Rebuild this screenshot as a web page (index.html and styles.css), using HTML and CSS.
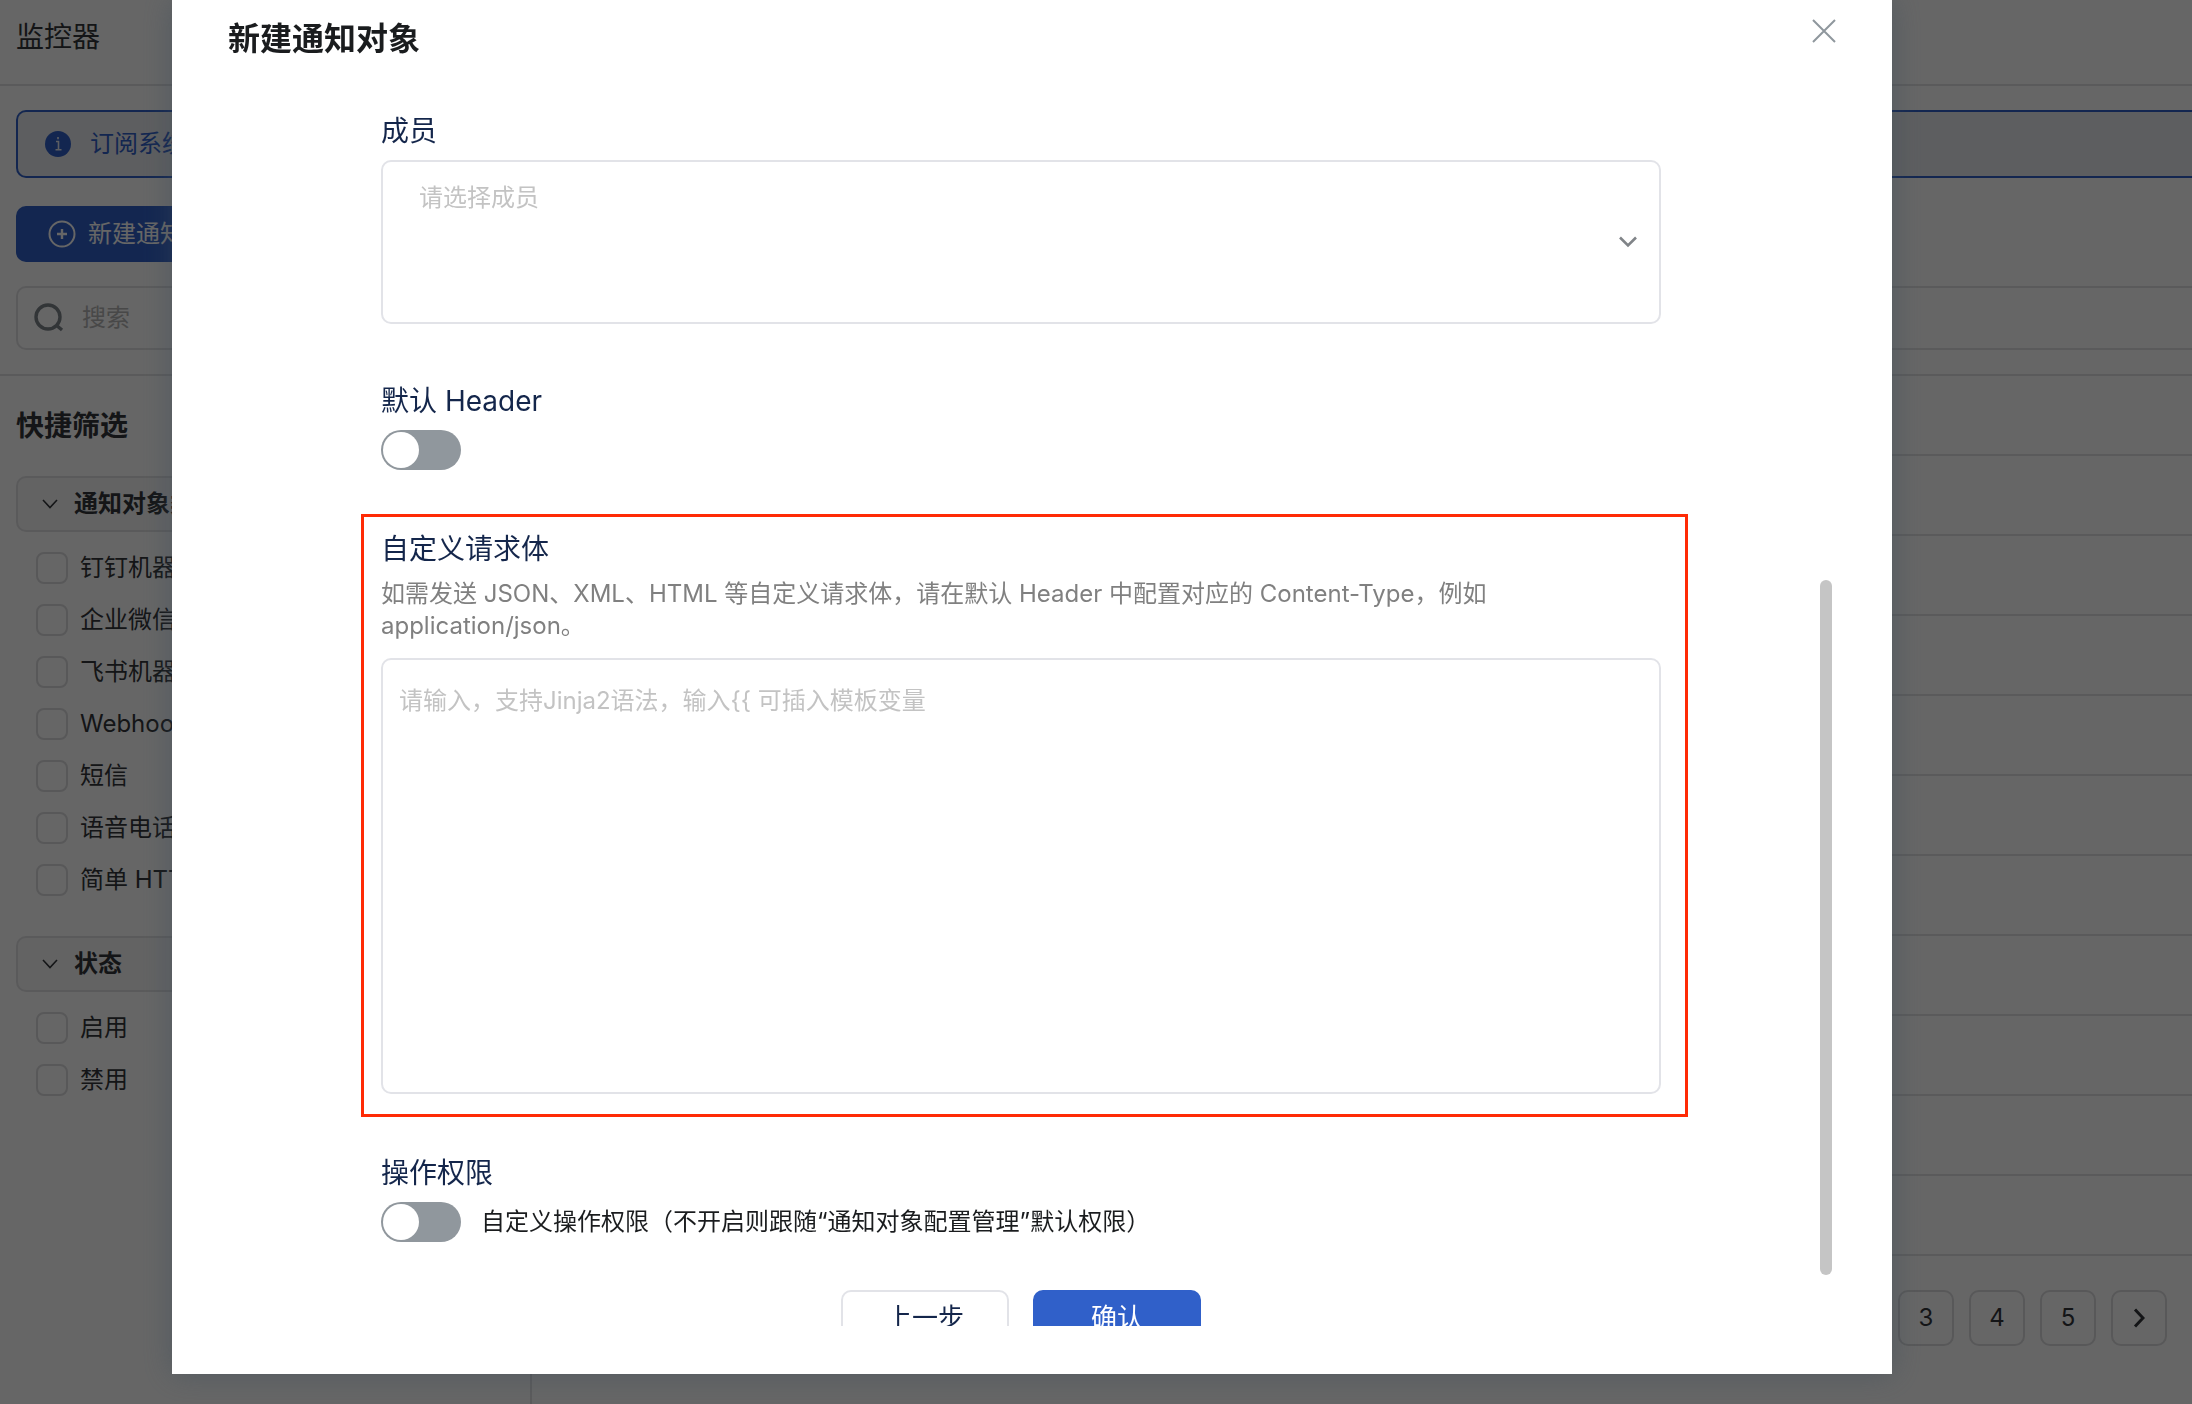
FILE: index.html
```html
<!DOCTYPE html>
<html lang="zh-CN">
<head>
    <meta charset="UTF-8">
    <meta name="viewport" content="width=device-width, initial-scale=1.0">
    <title>监控器 - 新建通知对象</title>
    <link rel="stylesheet" href="styles.css">
</head>
<body>
    <!-- Page behind the dialog -->
    <div class="page">
        <header class="page-header">监控器</header>

        <div class="toolbar">
            <div class="notice">
                <svg width="28" height="28" viewBox="0 0 28 28"><circle cx="14" cy="14" r="13" fill="#3060c9"/><path d="M12 11.5H14.5V19.5M11.5 19.8H17.5M14 7V9.2" stroke="#e8ecf4" stroke-width="1.6" fill="none"/></svg>
                <span>订阅系统通知</span>
            </div>
            <button class="btn-create">
                <svg width="28" height="28" viewBox="0 0 28 28" fill="none" stroke="#fff" stroke-width="2"><circle cx="14" cy="14" r="12.5"/><path d="M14 9V19M9 14H19" stroke-width="2.4"/></svg>
                新建通知对象
            </button>
            <div class="search">
                <svg width="32" height="32" viewBox="0 0 32 32" fill="none" stroke="#7d848b" stroke-width="3.4"><circle cx="16" cy="15" r="12"/><path d="M24 23L30 28"/></svg>
                <input type="text" placeholder="搜索" aria-label="搜索">
            </div>
        </div>

        <div class="content">
            <aside class="sidebar">
                <h2>快捷筛选</h2>
                <section>
                    <button class="group-title">
                        <svg width="16" height="10" viewBox="0 0 16 10" fill="none" stroke="#33363a" stroke-width="1.6"><path d="M1 1L8 8.5L15 1"/></svg>
                        通知对象类型
                    </button>
                    <label><input type="checkbox">钉钉机器人</label>
                    <label><input type="checkbox">企业微信机器人</label>
                    <label><input type="checkbox">飞书机器人</label>
                    <label><input type="checkbox">Webhook</label>
                    <label><input type="checkbox">短信</label>
                    <label><input type="checkbox">语音电话</label>
                    <label><input type="checkbox">简单 HTTP</label>
                </section>
                <section>
                    <button class="group-title">
                        <svg width="16" height="10" viewBox="0 0 16 10" fill="none" stroke="#33363a" stroke-width="1.6"><path d="M1 1L8 8.5L15 1"/></svg>
                        状态
                    </button>
                    <label><input type="checkbox">启用</label>
                    <label><input type="checkbox">禁用</label>
                </section>
            </aside>

            <main class="list">
                <div class="row"></div>
                <div class="row"></div>
                <div class="row"></div>
                <div class="row"></div>
                <div class="row"></div>
                <div class="row"></div>
                <div class="row"></div>
                <div class="row"></div>
                <div class="row"></div>
                <div class="row"></div>
                <div class="row"></div>
                <nav class="pagination">
                    <button>3</button>
                    <button>4</button>
                    <button>5</button>
                    <button aria-label="下一页">
                        <svg width="12" height="20" viewBox="0 0 12 20" fill="none" stroke="#33363a" stroke-width="3"><path d="M2 1.5L10 10L2 18.5"/></svg>
                    </button>
                </nav>
            </main>
        </div>
    </div>

    <!-- Dialog -->
    <div class="overlay">
        <div class="modal" role="dialog" aria-labelledby="modalTitle">
            <div class="modal-header">
                <h1 id="modalTitle">新建通知对象</h1>
                <button class="close" aria-label="关闭">
                    <svg width="24" height="24" viewBox="0 0 24 24" fill="none" stroke="#8f979d" stroke-width="2"><path d="M1 1L23 23M23 1L1 23"/></svg>
                </button>
            </div>

            <div class="modal-body">
                <form>
                    <div class="field">
                        <label for="members">成员</label>
                        <button type="button" class="select" id="members">
                            <span>请选择成员</span>
                            <svg width="18" height="12" viewBox="0 0 18 12" fill="none" stroke="#808488" stroke-width="2.6"><path d="M1 1.5L9 9.5L17 1.5"/></svg>
                        </button>
                    </div>

                    <div class="field">
                        <label for="defaultHeader">默认 Header</label>
                        <input type="checkbox" class="switch" id="defaultHeader">
                    </div>

                    <div class="field marked">
                        <label for="requestBody">自定义请求体</label>
                        <p>如需发送 JSON、XML、HTML 等自定义请求体，请在默认 Header 中配置对应的 Content-Type，例如 application/json。</p>
                        <textarea id="requestBody" placeholder="请输入，支持Jinja2语法，输入{{ 可插入模板变量"></textarea>
                    </div>

                    <div class="field">
                        <label for="permission">操作权限</label>
                        <div class="switch-row">
                            <input type="checkbox" class="switch" id="permission">
                            <span>自定义操作权限（不开启则跟随“通知对象配置管理”默认权限）</span>
                        </div>
                    </div>

                    <div class="actions">
                        <button type="button">上一步</button>
                        <button type="submit" class="primary">确认</button>
                    </div>
                </form>
                <div class="scrollbar"></div>
            </div>
        </div>
    </div>
</body>
</html>
```
FILE: styles.css
```css
/* General Styles */
* {
    margin: 0;
    padding: 0;
    box-sizing: border-box;
    font-family: Inter, "Noto Sans CJK SC", sans-serif;
}

body {
    background-color: #fff;
    color: #33363a;
    font-size: 24px;
    line-height: 32px;
    height: 100vh;
    overflow: hidden;
}

button, input, textarea {
    font-size: 24px;
    line-height: 32px;
    color: inherit;
    background: none;
    border: none;
}

button {
    cursor: pointer;
}

svg {
    flex: none;
    display: block;
}

/* Page behind the dialog */
.page {
    height: 100vh;
    display: flex;
    flex-direction: column;
    white-space: nowrap;
}

.page-header {
    height: 86px;
    padding: 17px 16px;
    font-size: 28px;
    line-height: 40px;
    border-bottom: 2px solid #e2e2e4;
}

.toolbar {
    display: flex;
    flex-direction: column;
    align-items: flex-start;
    padding: 24px 0 24px 16px;
    border-bottom: 2px solid #e2e2e4;
}

.notice {
    width: 100%;
    height: 68px;
    display: flex;
    align-items: center;
    gap: 18px;
    padding-left: 26px;
    border: 2px solid #3060c9;
    border-right: none;
    border-radius: 10px 0 0 10px;
    background-color: #e9ebef;
    color: #3060c9;
}

.btn-create {
    height: 56px;
    display: flex;
    align-items: center;
    gap: 12px;
    margin: 28px 0 24px;
    padding: 0 32px;
    border-radius: 10px;
    background-color: #3060c9;
    color: #fff;
}

.search {
    width: 100%;
    height: 64px;
    display: flex;
    align-items: center;
    gap: 18px;
    padding-left: 14px;
    border: 2px solid #e2e2e4;
    border-right: none;
    border-radius: 10px 0 0 10px;
}

.search input {
    flex: 1;
}

.search input::placeholder {
    color: #b4b4b4;
}

.content {
    flex: 1;
    display: flex;
}

/* Sidebar */
.sidebar {
    width: 532px;
    padding: 30px 16px;
    border-right: 2px solid #e2e2e4;
}

.sidebar h2 {
    font-size: 28px;
    line-height: 40px;
    margin-bottom: 30px;
}

.sidebar section {
    margin-bottom: 30px;
}

.group-title {
    width: 100%;
    height: 56px;
    display: flex;
    align-items: center;
    gap: 16px;
    margin-bottom: 10px;
    padding-left: 24px;
    border: 2px solid #e2e2e4;
    border-radius: 10px;
    background-color: #f7f7f8;
    font-weight: bold;
}

.sidebar label {
    height: 52px;
    display: flex;
    align-items: center;
    gap: 12px;
    padding-left: 20px;
}

.sidebar input {
    appearance: none;
    width: 32px;
    height: 32px;
    border: 2px solid #dcdcde;
    border-radius: 8px;
}

/* List */
.list {
    flex: 1;
}

.row {
    height: 80px;
    border-bottom: 2px solid #e2e2e4;
}

.pagination {
    display: flex;
    justify-content: flex-end;
    gap: 15px;
    padding: 34px 25px;
}

.pagination button {
    width: 56px;
    height: 56px;
    display: flex;
    align-items: center;
    justify-content: center;
    border: 2px solid #dcdcde;
    border-radius: 10px;
}

/* Dialog */
.overlay {
    position: fixed;
    inset: 0;
    display: flex;
    padding: 0 300px 30px 172px;
    background-color: rgba(0, 0, 0, 0.6);
}

.modal {
    flex: 1;
    display: flex;
    flex-direction: column;
    background-color: #fff;
    box-shadow: 0 0 28px rgba(60, 75, 90, 0.5);
}

.modal-header {
    display: flex;
    justify-content: space-between;
    align-items: flex-start;
    padding: 19px 56px 0;
    color: #1a1c1e;
}

.modal-header h1 {
    font-size: 32px;
    line-height: 40px;
}

.modal-body {
    flex: 1;
    min-height: 0;
    position: relative;
    overflow: hidden;
    margin-bottom: 48px;
    padding: 52px 231px 0 209px;
}

.field {
    margin-bottom: 57px;
}

.field label {
    display: block;
    margin-bottom: 9px;
    font-size: 28px;
    line-height: 40px;
    color: #14264b;
}

.select {
    width: 100%;
    height: 164px;
    display: flex;
    justify-content: space-between;
    align-items: center;
    padding: 20px 22px 20px 36px;
    border: 2px solid #e2e3e8;
    border-radius: 10px;
    color: #c3c3c3;
}

.select span {
    align-self: flex-start;
}

.switch {
    appearance: none;
    display: block;
    flex: none;
    width: 80px;
    height: 40px;
    padding: 2px;
    border-radius: 20px;
    background-color: #90979d;
}

.switch::before {
    content: "";
    display: block;
    width: 36px;
    height: 36px;
    border-radius: 50%;
    background-color: #fff;
}

.switch-row {
    display: flex;
    align-items: center;
    gap: 20px;
    color: #1a1c1e;
}

/* Highlighted field */
.marked {
    margin: -13px -27px 36px -20px;
    padding: 12px 24px 20px 17px;
    border: 3px solid #ff2a05;
}

.marked p {
    margin-bottom: 16px;
    color: #808080;
}

textarea {
    display: block;
    width: 100%;
    height: 436px;
    padding: 25px 16px;
    border: 2px solid #e2e3e8;
    border-radius: 10px;
    resize: none;
}

textarea::placeholder {
    color: #c3c3c3;
}

.actions {
    display: flex;
    justify-content: center;
    gap: 24px;
    margin-top: -9px;
}

.actions button {
    width: 168px;
    height: 56px;
    flex: none;
    border: 2px solid #e2e3e8;
    border-radius: 10px;
    font-size: 26px;
    color: #14264b;
}

.actions .primary {
    border-color: #3060c9;
    background-color: #3060c9;
    color: #fff;
}

.scrollbar {
    position: absolute;
    right: 60px;
    bottom: 51px;
    width: 12px;
    height: 695px;
    border-radius: 6px;
    background-color: #c5c5c5;
}
```
